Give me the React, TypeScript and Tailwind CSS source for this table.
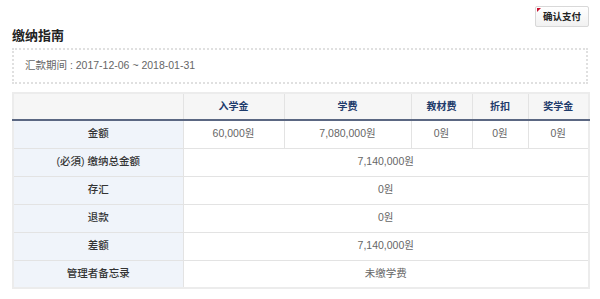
import React from "react";

const font = { fontFamily: '"Liberation Sans", "Noto Sans CJK SC", "Noto Sans CJK KR", sans-serif' };

export default function App() {
  const heads = ["入学金", "学费", "教材费", "折扣", "奖学金"];
  const amounts = ["60,000원", "7,080,000원", "0원", "0원", "0원"];
  const rows: [string, string][] = [
    ["(必須) 缴纳总金额", "7,140,000원"],
    ["存汇", "0원"],
    ["退款", "0원"],
    ["差额", "7,140,000원"],
    ["管理者备忘录", "未缴学费"],
  ];
  const th = "h-[27px] border-l border-[#e3e3e3] text-[10px] font-bold text-[#1e3b6b] text-center align-middle";
  const lab = "h-[28px] bg-[#f0f4fa] text-[10.5px] font-medium text-[#333] text-center align-middle border-t border-[#e3e3e3]";
  const val = "h-[28px] text-[10.5px] text-[#666] text-center align-middle border-t border-l border-[#e3e3e3]";
  return (
    <div className="w-[600px] h-[299px] bg-white px-3 pt-[6px]" style={font}>
      <div className="flex justify-end">
        <button className="relative h-[21px] w-[54px] mr-[-1px] rounded-[2px] border border-[#d8d8d8] bg-gradient-to-b from-white to-[#f1f1f1] text-[9.5px] font-bold text-[#222] leading-none">
          <span className="absolute left-[1px] top-[1px] w-0 h-0 border-t-[4px] border-r-[4px] border-t-[#c8102e] border-r-transparent"></span>
          确认支付
        </button>
      </div>
      <h2 className="text-[13px] font-bold leading-[17px] text-[#222]">缴纳指南</h2>
      <div className="mt-[4px] h-[36px] border-2 border-dotted border-[#e0e0e0] flex items-center pl-[11px] text-[10.5px] text-[#666]">
        汇款期间 : 2017-12-06 ~ 2018-01-31
      </div>
      <table className="mt-[8px] w-[576px] border-collapse border-2 border-[#ececec] table-fixed">
        <colgroup>
          <col className="w-[170px]" />
          <col className="w-[101px]" />
          <col className="w-[127px]" />
          <col className="w-[61px]" />
          <col className="w-[56px]" />
          <col className="w-[61px]" />
        </colgroup>
        <thead>
          <tr className="bg-[#f6f6f6] border-b-2 border-[#5b6782]">
            <th className="h-[27px]"></th>
            {heads.map((h) => (
              <th key={h} className={th}>{h}</th>
            ))}
          </tr>
        </thead>
        <tbody>
          <tr>
            <td className="h-[28px] bg-[#f0f4fa] text-[10.5px] font-medium text-[#333] text-center align-middle">金额</td>
            {amounts.map((a, i) => (
              <td key={i} className="h-[28px] text-[10.5px] text-[#666] text-center align-middle border-l border-[#e3e3e3]">{a}</td>
            ))}
          </tr>
          {rows.map(([l, v]) => (
            <tr key={l}>
              <td className={lab}>{l}</td>
              <td colSpan={5} className={val}>{v}</td>
            </tr>
          ))}
        </tbody>
      </table>
    </div>
  );
}
